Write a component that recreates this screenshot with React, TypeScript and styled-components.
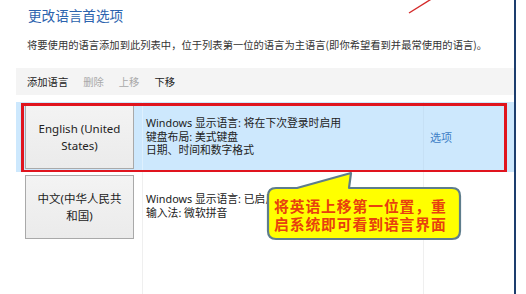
import React from 'react';
import styled, { createGlobalStyle } from 'styled-components';

const Global = createGlobalStyle`
  html, body { margin: 0; padding: 0; background: #fff; }
  body {
    width: 526px; height: 294px; overflow: hidden;
    font-family: "Noto Sans", "Noto Sans CJK SC", sans-serif;
  }
`;

const Page = styled.div`
  position: relative;
  width: 526px;
  height: 294px;
  display: flex;
  background: #fff;
  overflow: hidden;
`;

const Main = styled.div`
  width: 514px;
  display: flex;
  flex-direction: column;
  padding-left: 16px;
  box-sizing: border-box;
`;

const Frame = styled.div`
  width: 2px;
  background: #1d3e6e;
`;

const Outside = styled.div`
  flex: 1;
  background: #fff;
`;

const Title = styled.h1`
  margin: 6px 0 0 12px;
  font-family: "Noto Sans CJK SC", sans-serif;
  font-size: 13.6px;
  font-weight: 400;
  line-height: 18px;
  color: #2c63ae;
`;

const Intro = styled.p`
  margin: 14px 0 0 11px;
  font-family: "Noto Sans CJK SC", sans-serif;
  font-size: 10.3px;
  line-height: 14px;
  color: #333;
  white-space: nowrap;
`;

const Toolbar = styled.div`
  margin-top: 16px;
  height: 27px;
  display: flex;
  align-items: center;
  gap: 15px;
  padding-left: 11px;
  background: #f4f4f4;
`;

const ToolItem = styled.span<{ $disabled?: boolean }>`
  font-family: "Noto Sans CJK SC", sans-serif;
  font-size: 10.3px;
  line-height: 14px;
  color: ${(p) => (p.$disabled ? '#a9a9a9' : '#222')};
`;

const List = styled.div`
  margin-top: 7px;
  display: flex;
  flex-direction: column;
  flex: 1;
`;

const Row = styled.div<{ $selected?: boolean; $grow?: boolean }>`
  position: relative;
  display: grid;
  grid-template-columns: 126px 281px 1fr;
  height: ${(p) => (p.$grow ? 'auto' : '70px')};
  flex: ${(p) => (p.$grow ? '1' : 'none')};
  background: ${(p) => (p.$selected ? '#cde8fd' : '#fff')};
`;

const LangCell = styled.div`
  padding: 3px 0 0 9px;
`;

const LangButton = styled.div`
  width: 109px;
  height: 64px;
  box-sizing: border-box;
  border: 1px solid #a9a9a9;
  background: linear-gradient(#f3f3f3, #ebebeb);
  display: flex;
  align-items: center;
  justify-content: center;
  text-align: center;
  font-size: 11.5px;
  line-height: 17px;
  color: #222;
  padding: 0 6px;
`;

const DescCell = styled.div<{ $top: number; $selected?: boolean }>`
  border-left: 1px solid ${(p) => (p.$selected ? 'rgba(255,255,255,0.35)' : '#efefef')};
  padding: ${(p) => p.$top}px 0 0 3px;
  font-size: 10.8px;
  line-height: 13.5px;
  color: #222;
  white-space: nowrap;
  overflow: hidden;
`;

const DescLine = styled.div``;

const OptCell = styled.div<{ $selected?: boolean }>`
  border-left: 1px solid ${(p) => (p.$selected ? 'rgba(0,0,0,0.03)' : '#efefef')};
  display: flex;
  align-items: center;
  padding-left: 6px;
  font-family: "Noto Sans CJK SC", sans-serif;
  font-size: 11px;
  color: #3d7ec6;
`;

const Highlight = styled.div`
  position: absolute;
  left: 5px;
  right: 7px;
  top: 1px;
  bottom: -1px;
  border: 3px solid #e0141e;
  pointer-events: none;
`;

const Callout = styled.div`
  position: absolute;
  left: 265px;
  top: 171px;
  width: 198px;
  height: 70px;
`;

const CalloutShape = styled.svg`
  position: absolute;
  inset: 0;
`;

const CalloutText = styled.div`
  position: absolute;
  left: 9px;
  top: 26px;
  font-family: "Noto Sans CJK SC", sans-serif;
  font-weight: 700;
  font-size: 14.8px;
  letter-spacing: 0.9px;
  line-height: 17.5px;
  color: #e8400e;
  white-space: nowrap;
`;

const ArrowMark = styled.svg`
  position: absolute;
  left: 405px;
  top: 0;
`;

export default function App() {
  return (
    <>
      <Global />
      <Page>
        <Main>
          <Title>更改语言首选项</Title>
          <Intro>将要使用的语言添加到此列表中，位于列表第一位的语言为主语言(即你希望看到并最常使用的语言)。</Intro>
          <Toolbar>
            <ToolItem>添加语言</ToolItem>
            <ToolItem $disabled>删除</ToolItem>
            <ToolItem $disabled>上移</ToolItem>
            <ToolItem>下移</ToolItem>
          </Toolbar>
          <List>
            <Row $selected>
              <LangCell>
                <LangButton>English (United States)</LangButton>
              </LangCell>
              <DescCell $top={14} $selected>
                <DescLine>Windows 显示语言: 将在下次登录时启用</DescLine>
                <DescLine>键盘布局: 美式键盘</DescLine>
                <DescLine>日期、时间和数字格式</DescLine>
              </DescCell>
              <OptCell $selected>选项</OptCell>
              <Highlight />
            </Row>
            <Row $grow>
              <LangCell>
                <LangButton>中文(中华人民共和国)</LangButton>
              </LangCell>
              <DescCell $top={20}>
                <DescLine>Windows 显示语言: 已启用</DescLine>
                <DescLine>输入法: 微软拼音</DescLine>
              </DescCell>
              <OptCell />
            </Row>
          </List>
        </Main>
        <Frame />
        <Outside />
        <Callout>
          <CalloutShape width="198" height="70" viewBox="0 0 198 70">
            <path
              d="M 11 17 L 32 17 L 86 2 L 84 17 L 187 17 Q 195 17 195 25 L 195 60 Q 195 68 187 68 L 11 68 Q 3 68 3 60 L 3 25 Q 3 17 11 17 Z"
              fill="#ffff00"
              stroke="#5e7d8c"
              strokeWidth="2.2"
              strokeLinejoin="round"
            />
          </CalloutShape>
          <CalloutText>
            将英语上移第一位置，重
            <br />
            启系统即可看到语言界面
          </CalloutText>
        </Callout>
        <ArrowMark width="30" height="16" viewBox="0 0 30 16">
          <line x1="4" y1="13" x2="28" y2="-2" stroke="#d42a2a" strokeWidth="1.4" />
        </ArrowMark>
      </Page>
    </>
  );
}
